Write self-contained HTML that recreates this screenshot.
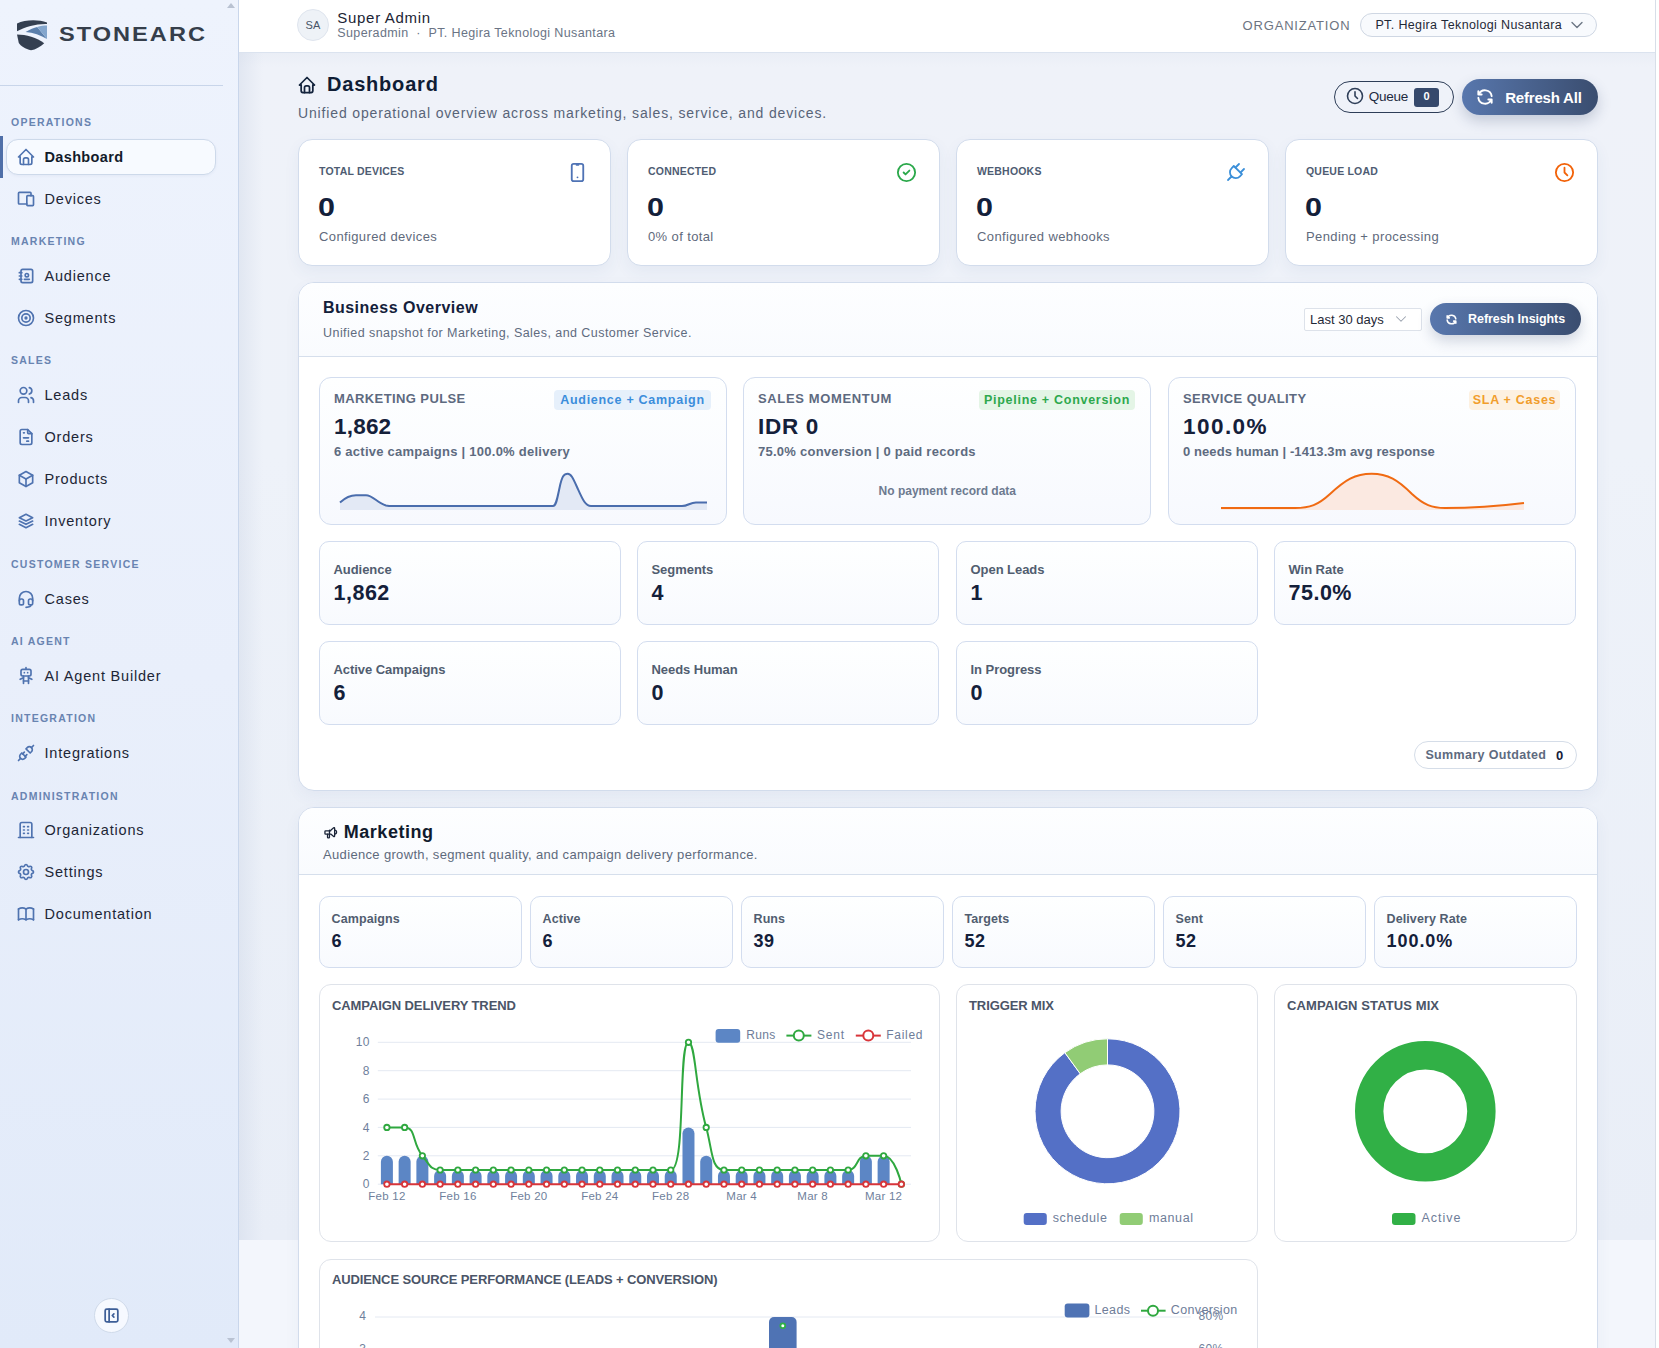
<!DOCTYPE html>
<html><head><meta charset="utf-8"><style>
*{box-sizing:border-box;margin:0;padding:0}
html,body{width:1659px;height:1348px;overflow:hidden;font-family:"Liberation Sans",sans-serif;color:#111c2e}
body{position:relative;background:#f4f7fc}
.a{position:absolute}
.t{position:absolute;white-space:nowrap;line-height:1}
</style></head><body>
<div class="a" style="left:0px;top:0px;width:239px;height:1348px;background:linear-gradient(180deg,#eef3fd 0%,#e9effb 50%,#e1eaf9 100%);border-right:1px solid #c9d6eb"></div>
<svg class="a" style="left:16px;top:18px;width:32px;height:33px" viewBox="16 18 32 33">
<path d="M17,23.4 C25,19.6 38,19.2 47,22.4 L47,23.9 C36,23.6 26,26.5 17,31.2 Z" fill="#343f50"/>
<path d="M25.6,32 C30,29.5 34,27.8 37.2,27 L47,39 C41,35.2 33,32.6 25.6,32 Z" fill="#5b7fab"/>
<path d="M37.2,27 C40.5,26 44,25.6 47,25.6 L47,39 Z" fill="#84a6cd"/>
<path d="M17,34.6 C26,34.6 37,37.8 44.2,43.2 C40.5,46.8 35.5,49.6 31,50.2 C25.5,49 20.5,46 18.8,43 Z" fill="#343f50"/>
</svg>
<div class="t" style="left:58.5px;top:24.0px;font-size:20.5px;font-weight:bold;color:#353e4b;letter-spacing:1.75px;transform:scaleX(1.15);transform-origin:0 0">STONEARC</div>
<div class="a" style="left:0px;top:85px;width:223px;height:1px;background:#c8d5ea"></div>
<div class="t" style="left:11.0px;top:117.1px;font-size:10.5px;font-weight:bold;color:#6984b1;letter-spacing:1.25px">OPERATIONS</div>
<div class="a" style="left:6px;top:139px;width:210px;height:36px;background:#f7faff;border:1px solid #cdd9ea;border-radius:12px;box-shadow:0 1px 3px rgba(60,90,140,0.06)"></div>
<div class="a" style="left:0px;top:136px;width:3px;height:42px;background:#4f6fa8"></div>
<svg class="a" style="left:15.5px;top:146.5px;width:20px;height:20px" viewBox="0 0 24 24" fill="none" stroke="#4f73b0" stroke-width="2" stroke-linecap="round" stroke-linejoin="round"><path d="M5 12l-2 0l9 -9l9 9l-2 0"/><path d="M5 12v7a2 2 0 0 0 2 2h10a2 2 0 0 0 2 -2v-7"/><path d="M9 21v-6a2 2 0 0 1 2 -2h2a2 2 0 0 1 2 2v6"/></svg>
<div class="t" style="left:44.5px;top:149.7px;font-size:14.5px;font-weight:bold;color:#121a2a;letter-spacing:0.35px">Dashboard</div>
<svg class="a" style="left:15.5px;top:188.5px;width:20px;height:20px" viewBox="0 0 24 24" fill="none" stroke="#4f73b0" stroke-width="2" stroke-linecap="round" stroke-linejoin="round"><path d="M13 9a1 1 0 0 1 1 -1h6a1 1 0 0 1 1 1v10a1 1 0 0 1 -1 1h-6a1 1 0 0 1 -1 -1v-10z"/><path d="M18 8v-3a1 1 0 0 0 -1 -1h-13a1 1 0 0 0 -1 1v12a1 1 0 0 0 1 1h9"/></svg>
<div class="t" style="left:44.5px;top:191.7px;font-size:14.5px;color:#1d2636;letter-spacing:0.8px">Devices</div>
<div class="t" style="left:11.0px;top:236.1px;font-size:10.5px;font-weight:bold;color:#6984b1;letter-spacing:1.25px">MARKETING</div>
<svg class="a" style="left:15.5px;top:265.5px;width:20px;height:20px" viewBox="0 0 24 24" fill="none" stroke="#4f73b0" stroke-width="2" stroke-linecap="round" stroke-linejoin="round"><path d="M20 6v12a2 2 0 0 1 -2 2h-10a2 2 0 0 1 -2 -2v-12a2 2 0 0 1 2 -2h10a2 2 0 0 1 2 2z"/><path d="M10 16h6"/><path d="M11 11a2 2 0 1 0 4 0a2 2 0 1 0 -4 0"/><path d="M4 8h3"/><path d="M4 12h3"/><path d="M4 16h3"/></svg>
<div class="t" style="left:44.5px;top:268.7px;font-size:14.5px;color:#1d2636;letter-spacing:0.8px">Audience</div>
<svg class="a" style="left:15.5px;top:307.5px;width:20px;height:20px" viewBox="0 0 24 24" fill="none" stroke="#4f73b0" stroke-width="2" stroke-linecap="round" stroke-linejoin="round"><path d="M11 12a1 1 0 1 0 2 0a1 1 0 1 0 -2 0"/><path d="M7 12a5 5 0 1 0 10 0a5 5 0 1 0 -10 0"/><path d="M3 12a9 9 0 1 0 18 0a9 9 0 1 0 -18 0"/></svg>
<div class="t" style="left:44.5px;top:310.7px;font-size:14.5px;color:#1d2636;letter-spacing:0.8px">Segments</div>
<div class="t" style="left:11.0px;top:355.1px;font-size:10.5px;font-weight:bold;color:#6984b1;letter-spacing:1.25px">SALES</div>
<svg class="a" style="left:15.5px;top:384.5px;width:20px;height:20px" viewBox="0 0 24 24" fill="none" stroke="#4f73b0" stroke-width="2" stroke-linecap="round" stroke-linejoin="round"><path d="M5 7a4 4 0 1 0 8 0a4 4 0 1 0 -8 0"/><path d="M3 21v-2a4 4 0 0 1 4 -4h4a4 4 0 0 1 4 4v2"/><path d="M16 3.13a4 4 0 0 1 0 7.75"/><path d="M21 21v-2a4 4 0 0 0 -3 -3.85"/></svg>
<div class="t" style="left:44.5px;top:387.7px;font-size:14.5px;color:#1d2636;letter-spacing:0.8px">Leads</div>
<svg class="a" style="left:15.5px;top:426.5px;width:20px;height:20px" viewBox="0 0 24 24" fill="none" stroke="#4f73b0" stroke-width="2" stroke-linecap="round" stroke-linejoin="round"><path d="M14 3v4a1 1 0 0 0 1 1h4"/><path d="M17 21h-10a2 2 0 0 1 -2 -2v-14a2 2 0 0 1 2 -2h7l5 5v11a2 2 0 0 1 -2 2z"/><path d="M9 7l1 0"/><path d="M9 13l6 0"/><path d="M13 17l2 0"/></svg>
<div class="t" style="left:44.5px;top:429.7px;font-size:14.5px;color:#1d2636;letter-spacing:0.8px">Orders</div>
<svg class="a" style="left:15.5px;top:468.5px;width:20px;height:20px" viewBox="0 0 24 24" fill="none" stroke="#4f73b0" stroke-width="2" stroke-linecap="round" stroke-linejoin="round"><path d="M12 3l8 4.5l0 9l-8 4.5l-8 -4.5l0 -9l8 -4.5"/><path d="M12 12l8 -4.5"/><path d="M12 12l0 9"/><path d="M12 12l-8 -4.5"/></svg>
<div class="t" style="left:44.5px;top:471.7px;font-size:14.5px;color:#1d2636;letter-spacing:0.8px">Products</div>
<svg class="a" style="left:15.5px;top:510.5px;width:20px;height:20px" viewBox="0 0 24 24" fill="none" stroke="#4f73b0" stroke-width="2" stroke-linecap="round" stroke-linejoin="round"><path d="M12 4l-8 4l8 4l8 -4l-8 -4"/><path d="M4 12l8 4l8 -4"/><path d="M4 16l8 4l8 -4"/></svg>
<div class="t" style="left:44.5px;top:513.7px;font-size:14.5px;color:#1d2636;letter-spacing:0.8px">Inventory</div>
<div class="t" style="left:11.0px;top:559.1px;font-size:10.5px;font-weight:bold;color:#6984b1;letter-spacing:1.25px">CUSTOMER SERVICE</div>
<svg class="a" style="left:15.5px;top:588.5px;width:20px;height:20px" viewBox="0 0 24 24" fill="none" stroke="#4f73b0" stroke-width="2" stroke-linecap="round" stroke-linejoin="round"><path d="M4 14v-3a8 8 0 1 1 16 0v3"/><path d="M18 19c0 1.657 -2.686 3 -6 3"/><path d="M4 14a2 2 0 0 1 2 -2h1a2 2 0 0 1 2 2v3a2 2 0 0 1 -2 2h-1a2 2 0 0 1 -2 -2v-3z"/><path d="M15 14a2 2 0 0 1 2 -2h1a2 2 0 0 1 2 2v3a2 2 0 0 1 -2 2h-1a2 2 0 0 1 -2 -2v-3z"/></svg>
<div class="t" style="left:44.5px;top:591.7px;font-size:14.5px;color:#1d2636;letter-spacing:0.8px">Cases</div>
<div class="t" style="left:11.0px;top:636.1px;font-size:10.5px;font-weight:bold;color:#6984b1;letter-spacing:1.25px">AI AGENT</div>
<svg class="a" style="left:15.5px;top:665.5px;width:20px;height:20px" viewBox="0 0 24 24" fill="none" stroke="#4f73b0" stroke-width="2" stroke-linecap="round" stroke-linejoin="round"><path d="M6 6a2 2 0 0 1 2 -2h8a2 2 0 0 1 2 2v4a2 2 0 0 1 -2 2h-8a2 2 0 0 1 -2 -2z"/><path d="M12 2v2"/><path d="M9 12v9"/><path d="M15 12v9"/><path d="M5 16l4 -2"/><path d="M15 14l4 2"/><path d="M9 18h6"/><path d="M10 8v.01"/><path d="M14 8v.01"/></svg>
<div class="t" style="left:44.5px;top:668.7px;font-size:14.5px;color:#1d2636;letter-spacing:0.8px">AI Agent Builder</div>
<div class="t" style="left:11.0px;top:713.1px;font-size:10.5px;font-weight:bold;color:#6984b1;letter-spacing:1.25px">INTEGRATION</div>
<svg class="a" style="left:15.5px;top:742.5px;width:20px;height:20px" viewBox="0 0 24 24" fill="none" stroke="#4f73b0" stroke-width="2" stroke-linecap="round" stroke-linejoin="round"><path d="M7 12l5 5l-1.5 1.5a3.536 3.536 0 1 1 -5 -5l1.5 -1.5z"/><path d="M17 12l-5 -5l1.5 -1.5a3.536 3.536 0 1 1 5 5l-1.5 1.5z"/><path d="M3 21l2.5 -2.5"/><path d="M18.5 5.5l2.5 -2.5"/><path d="M10 11l-2 2"/><path d="M13 14l-2 2"/></svg>
<div class="t" style="left:44.5px;top:745.7px;font-size:14.5px;color:#1d2636;letter-spacing:0.8px">Integrations</div>
<div class="t" style="left:11.0px;top:791.1px;font-size:10.5px;font-weight:bold;color:#6984b1;letter-spacing:1.25px">ADMINISTRATION</div>
<svg class="a" style="left:15.5px;top:819.5px;width:20px;height:20px" viewBox="0 0 24 24" fill="none" stroke="#4f73b0" stroke-width="2" stroke-linecap="round" stroke-linejoin="round"><path d="M3 21l18 0"/><path d="M9 8l1 0"/><path d="M9 12l1 0"/><path d="M9 16l1 0"/><path d="M14 8l1 0"/><path d="M14 12l1 0"/><path d="M14 16l1 0"/><path d="M5 21v-16a2 2 0 0 1 2 -2h10a2 2 0 0 1 2 2v16"/></svg>
<div class="t" style="left:44.5px;top:822.7px;font-size:14.5px;color:#1d2636;letter-spacing:0.8px">Organizations</div>
<svg class="a" style="left:15.5px;top:861.5px;width:20px;height:20px" viewBox="0 0 24 24" fill="none" stroke="#4f73b0" stroke-width="2" stroke-linecap="round" stroke-linejoin="round"><path d="M10.325 4.317c.426 -1.756 2.924 -1.756 3.35 0a1.724 1.724 0 0 0 2.573 1.066c1.543 -.94 3.31 .826 2.37 2.37a1.724 1.724 0 0 0 1.065 2.572c1.756 .426 1.756 2.924 0 3.35a1.724 1.724 0 0 0 -1.066 2.573c.94 1.543 -.826 3.31 -2.37 2.37a1.724 1.724 0 0 0 -2.572 1.065c-.426 1.756 -2.924 1.756 -3.35 0a1.724 1.724 0 0 0 -2.573 -1.066c-1.543 .94 -3.31 -.826 -2.37 -2.37a1.724 1.724 0 0 0 -1.065 -2.572c-1.756 -.426 -1.756 -2.924 0 -3.35a1.724 1.724 0 0 0 1.066 -2.573c-.94 -1.543 .826 -3.31 2.37 -2.37c1 .608 2.296 .07 2.572 -1.065z"/><path d="M9 12a3 3 0 1 0 6 0a3 3 0 0 0 -6 0"/></svg>
<div class="t" style="left:44.5px;top:864.7px;font-size:14.5px;color:#1d2636;letter-spacing:0.8px">Settings</div>
<svg class="a" style="left:15.5px;top:903.5px;width:20px;height:20px" viewBox="0 0 24 24" fill="none" stroke="#4f73b0" stroke-width="2" stroke-linecap="round" stroke-linejoin="round"><path d="M3 19a9 9 0 0 1 9 0a9 9 0 0 1 9 0"/><path d="M3 6a9 9 0 0 1 9 0a9 9 0 0 1 9 0"/><path d="M3 6l0 13"/><path d="M12 6l0 13"/><path d="M21 6l0 13"/></svg>
<div class="t" style="left:44.5px;top:906.7px;font-size:14.5px;color:#1d2636;letter-spacing:0.8px">Documentation</div>
<svg class="a" style="left:226px;top:1px;width:10px;height:8px" viewBox="0 0 10 8"><path d="M1,7 L5,2 L9,7Z" fill="#b9c2d2"/></svg>
<svg class="a" style="left:226px;top:1337px;width:10px;height:8px" viewBox="0 0 10 8"><path d="M1,1 L5,6 L9,1Z" fill="#b9c2d2"/></svg>
<div class="a" style="left:94px;top:1298px;width:35px;height:35px;background:#f6f9ff;border:1px solid #cfdaea;border-radius:50%"></div>
<svg class="a" style="left:102px;top:1306px;width:19px;height:19px" viewBox="0 0 24 24" fill="none" stroke="#3e5f98" stroke-width="2.2" stroke-linecap="round" stroke-linejoin="round"><path d="M4 6a2 2 0 0 1 2 -2h12a2 2 0 0 1 2 2v12a2 2 0 0 1 -2 2h-12a2 2 0 0 1 -2 -2z"/><path d="M9 4v16"/><path d="M15 10l-2 2l2 2"/></svg>
<div class="a" style="left:239px;top:0px;width:1417px;height:53px;background:#fff;border-bottom:1px solid #dbe3ef"></div>
<div class="a" style="left:239px;top:53px;width:1417px;height:1187px;background:linear-gradient(180deg,#eaeef6 0px,#eff2f9 14px,#eef2f9 400px,#e9eef7 100%)"></div>
<div class="a" style="left:239px;top:53px;width:24px;height:1295px;background:linear-gradient(90deg,rgba(200,210,228,0.35),rgba(200,210,228,0))"></div>
<div class="a" style="left:239px;top:1240px;width:1417px;height:108px;background:#f3f6fc"></div>
<div class="a" style="left:1655px;top:0px;width:4px;height:1348px;background:#fff;border-left:1px solid #d8dee8"></div>
<div class="a" style="left:297px;top:9px;width:32px;height:32px;background:#eef2f7;border:1px solid #dfe5ee;border-radius:50%"></div>
<div class="t" style="left:13.0px;width:600px;text-align:center;top:20.2px;font-size:11px;color:#485466;letter-spacing:0.2px">SA</div>
<div class="t" style="left:337.3px;top:9.5px;font-size:15px;color:#1b2434;letter-spacing:0.7px">Super Admin</div>
<div class="t" style="left:337.3px;top:27.4px;font-size:12.5px;color:#6a7485;letter-spacing:0.38px">Superadmin &nbsp;·&nbsp; PT. Hegira Teknologi Nusantara</div>
<div class="t" style="left:1242.6px;top:18.5px;font-size:13px;color:#6d7481;letter-spacing:0.82px">ORGANIZATION</div>
<div class="a" style="left:1360px;top:13px;width:237px;height:24px;background:#f8fafd;border:1px solid #cfd7e3;border-radius:12px"></div>
<div class="t" style="left:1375.4px;top:18.9px;font-size:12.5px;color:#1f2937;letter-spacing:0.37px">PT. Hegira Teknologi Nusantara</div>
<svg class="a" style="left:1566.5px;top:15px;width:20px;height:20px" viewBox="0 0 24 24" fill="none" stroke="#6b7583" stroke-width="1.6" stroke-linecap="round" stroke-linejoin="round"><path d="M6 9l6 6l6 -6"/></svg>
<svg class="a" style="left:297px;top:75px;width:20px;height:20px" viewBox="0 0 24 24" fill="none" stroke="#14243d" stroke-width="2.1" stroke-linecap="round" stroke-linejoin="round"><path d="M5 12l-2 0l9 -9l9 9l-2 0"/><path d="M5 12v7a2 2 0 0 0 2 2h10a2 2 0 0 0 2 -2v-7"/><path d="M9 21v-6a2 2 0 0 1 2 -2h2a2 2 0 0 1 2 2v6"/></svg>
<div class="t" style="left:327.0px;top:74.1px;font-size:20px;font-weight:bold;color:#0f1d35;letter-spacing:0.8px">Dashboard</div>
<div class="t" style="left:298.0px;top:106.1px;font-size:14px;color:#586478;letter-spacing:0.85px">Unified operational overview across marketing, sales, service, and devices.</div>
<div class="a" style="left:1334px;top:81px;width:120px;height:32px;border:1px solid #2e3e58;border-radius:16px"></div>
<svg class="a" style="left:1345px;top:86px;width:20px;height:20px" viewBox="0 0 24 24" fill="none" stroke="#2e3e58" stroke-width="1.9" stroke-linecap="round" stroke-linejoin="round"><path d="M3 12a9 9 0 1 0 18 0a9 9 0 0 0 -18 0"/><path d="M12 7v5l3 3"/></svg>
<div class="t" style="left:1368.8px;top:90.4px;font-size:13.5px;color:#1d2a40;letter-spacing:-0.25px">Queue</div>
<div class="a" style="left:1414px;top:88px;width:25px;height:19px;background:#36496c;border-radius:3px"></div>
<div class="t" style="left:1126.5px;width:600px;text-align:center;top:91.2px;font-size:11px;color:#fff;font-weight:bold">0</div>
<div class="a" style="left:1462px;top:79px;width:136px;height:36px;background:linear-gradient(90deg,#5877ad,#3a4d6f);border-radius:18px;box-shadow:0 6px 14px rgba(40,60,100,0.22)"></div>
<svg class="a" style="left:1475px;top:87px;width:20px;height:20px" viewBox="0 0 24 24" fill="none" stroke="#ffffff" stroke-width="2.3" stroke-linecap="round" stroke-linejoin="round"><path d="M20 11a8.1 8.1 0 0 0 -15.5 -2m-.5 -4v4h4"/><path d="M4 13a8.1 8.1 0 0 0 15.5 2m.5 4v-4h-4"/></svg>
<div class="t" style="left:1505.2px;top:89.6px;font-size:15px;color:#fff;font-weight:bold;letter-spacing:-0.2px">Refresh All</div>
<div class="a" style="left:298px;top:139px;width:313px;height:127px;background:#fff;border:1px solid #d2dcec;border-radius:14px;box-shadow:0 6px 16px rgba(50,80,130,0.06)"></div>
<div class="t" style="left:319.0px;top:166.3px;font-size:10.5px;font-weight:bold;color:#4e5c72;letter-spacing:0.2px">TOTAL DEVICES</div>
<div class="t" style="left:318.0px;top:194.8px;font-size:25px;font-weight:bold;color:#13203a;transform:scaleX(1.22);transform-origin:0 0">0</div>
<div class="t" style="left:319.0px;top:229.6px;font-size:13px;color:#5f6a7c;letter-spacing:0.38px">Configured devices</div>
<svg class="a" style="left:566px;top:160.5px;width:23px;height:23px" viewBox="0 0 24 24" fill="none" stroke="#4f73b5" stroke-width="1.9" stroke-linecap="round" stroke-linejoin="round"><path d="M6 5a2 2 0 0 1 2 -2h8a2 2 0 0 1 2 2v14a2 2 0 0 1 -2 2h-8a2 2 0 0 1 -2 -2v-14z"/><path d="M11 4h2"/><path d="M12 17v.01"/></svg>
<div class="a" style="left:627px;top:139px;width:313px;height:127px;background:#fff;border:1px solid #d2dcec;border-radius:14px;box-shadow:0 6px 16px rgba(50,80,130,0.06)"></div>
<div class="t" style="left:648.0px;top:166.3px;font-size:10.5px;font-weight:bold;color:#4e5c72;letter-spacing:0.2px">CONNECTED</div>
<div class="t" style="left:647.0px;top:194.8px;font-size:25px;font-weight:bold;color:#13203a;transform:scaleX(1.22);transform-origin:0 0">0</div>
<div class="t" style="left:648.0px;top:229.6px;font-size:13px;color:#5f6a7c;letter-spacing:0.38px">0% of total</div>
<svg class="a" style="left:895px;top:160.5px;width:23px;height:23px" viewBox="0 0 24 24" fill="none" stroke="#2aa84a" stroke-width="1.9" stroke-linecap="round" stroke-linejoin="round"><path d="M3 12a9 9 0 1 0 18 0a9 9 0 1 0 -18 0"/><path d="M9 12l2 2l4 -4"/></svg>
<div class="a" style="left:956px;top:139px;width:313px;height:127px;background:#fff;border:1px solid #d2dcec;border-radius:14px;box-shadow:0 6px 16px rgba(50,80,130,0.06)"></div>
<div class="t" style="left:977.0px;top:166.3px;font-size:10.5px;font-weight:bold;color:#4e5c72;letter-spacing:0.2px">WEBHOOKS</div>
<div class="t" style="left:976.0px;top:194.8px;font-size:25px;font-weight:bold;color:#13203a;transform:scaleX(1.22);transform-origin:0 0">0</div>
<div class="t" style="left:977.0px;top:229.6px;font-size:13px;color:#5f6a7c;letter-spacing:0.38px">Configured webhooks</div>
<svg class="a" style="left:1223.5px;top:160px;width:24px;height:24px" viewBox="0 0 24 24" fill="none" stroke="#3b8fd9" stroke-width="1.8" stroke-linecap="round" stroke-linejoin="round"><path d="M9.785 6l8.215 8.215l-2.054 2.054a5.81 5.81 0 1 1 -8.215 -8.215l2.054 -2.054z"/><path d="M4 20l3.5 -3.5"/><path d="M15 4l-3.5 3.5"/><path d="M20 9l-3.5 3.5"/></svg>
<div class="a" style="left:1285px;top:139px;width:313px;height:127px;background:#fff;border:1px solid #d2dcec;border-radius:14px;box-shadow:0 6px 16px rgba(50,80,130,0.06)"></div>
<div class="t" style="left:1306.0px;top:166.3px;font-size:10.5px;font-weight:bold;color:#4e5c72;letter-spacing:0.2px">QUEUE LOAD</div>
<div class="t" style="left:1305.0px;top:194.8px;font-size:25px;font-weight:bold;color:#13203a;transform:scaleX(1.22);transform-origin:0 0">0</div>
<div class="t" style="left:1306.0px;top:229.6px;font-size:13px;color:#5f6a7c;letter-spacing:0.38px">Pending + processing</div>
<svg class="a" style="left:1553px;top:160.5px;width:23px;height:23px" viewBox="0 0 24 24" fill="none" stroke="#f26208" stroke-width="1.9" stroke-linecap="round" stroke-linejoin="round"><path d="M3 12a9 9 0 1 0 18 0a9 9 0 0 0 -18 0"/><path d="M12 7v5l3 3"/></svg>
<div class="a" style="left:298px;top:282px;width:1300px;height:509px;background:#fff;border:1px solid #d2dcec;border-radius:16px;box-shadow:0 6px 16px rgba(50,80,130,0.05)"></div>
<div class="a" style="left:299px;top:283px;width:1298px;height:74px;background:linear-gradient(180deg,#fdfeff,#f9fbfe);border-radius:15px 15px 0 0;border-bottom:1px solid #d6dfec"></div>
<div class="t" style="left:322.9px;top:300.4px;font-size:16px;font-weight:bold;color:#13203a;letter-spacing:0.5px">Business Overview</div>
<div class="t" style="left:323.0px;top:327.4px;font-size:12.5px;color:#5f6b7e;letter-spacing:0.45px">Unified snapshot for Marketing, Sales, and Customer Service.</div>
<div class="a" style="left:1304px;top:308px;width:118px;height:23px;background:#fff;border:1px solid #dde2ea;border-radius:2px"></div>
<div class="t" style="left:1310.0px;top:312.8px;font-size:13px;color:#1f2937;letter-spacing:0px">Last 30 days</div>
<svg class="a" style="left:1392px;top:310px;width:18px;height:18px" viewBox="0 0 24 24" fill="none" stroke="#9aa2ae" stroke-width="1.4" stroke-linecap="round" stroke-linejoin="round"><path d="M6 9l6 6l6 -6"/></svg>
<div class="a" style="left:1430px;top:303px;width:151px;height:32px;background:linear-gradient(90deg,#5877ad,#3a4d6f);border-radius:16px;box-shadow:0 6px 14px rgba(40,60,100,0.2)"></div>
<svg class="a" style="left:1444.5px;top:312.5px;width:13px;height:13px" viewBox="0 0 24 24" fill="none" stroke="#ffffff" stroke-width="2.8" stroke-linecap="round" stroke-linejoin="round"><path d="M20 11a8.1 8.1 0 0 0 -15.5 -2m-.5 -4v4h4"/><path d="M4 13a8.1 8.1 0 0 0 15.5 2m.5 4v-4h-4"/></svg>
<div class="t" style="left:1468.0px;top:313.2px;font-size:12.5px;color:#fff;font-weight:bold;letter-spacing:-0.05px">Refresh Insights</div>
<div class="a" style="left:319px;top:377px;width:408px;height:148px;background:linear-gradient(180deg,#feffff,#f7f9fe);border:1px solid #d3ddef;border-radius:12px"></div>
<div class="t" style="left:334.0px;top:391.8px;font-size:13px;font-weight:bold;color:#5d6a80;letter-spacing:0.4px">MARKETING PULSE</div>
<div class="a" style="left:554px;top:390px;width:157px;height:20px;background:#e6f0fb;border-radius:4px"></div>
<div class="t" style="left:332.5px;width:600px;text-align:center;top:393.9px;font-size:12.5px;font-weight:bold;color:#3b8ddb;letter-spacing:0.72px">Audience + Campaign</div>
<div class="t" style="left:334.0px;top:415.5px;font-size:22.5px;font-weight:bold;color:#14203a;letter-spacing:0.2px">1,862</div>
<div class="t" style="left:334.0px;top:445.0px;font-size:13px;font-weight:bold;color:#5e6b80;letter-spacing:0.25px">6 active campaigns | 100.0% delivery</div>
<div class="a" style="left:743px;top:377px;width:408px;height:148px;background:linear-gradient(180deg,#feffff,#f7f9fe);border:1px solid #d3ddef;border-radius:12px"></div>
<div class="t" style="left:758.0px;top:391.8px;font-size:13px;font-weight:bold;color:#5d6a80;letter-spacing:0.64px">SALES MOMENTUM</div>
<div class="a" style="left:979px;top:390px;width:156px;height:20px;background:#e4f5e6;border-radius:4px"></div>
<div class="t" style="left:757.0px;width:600px;text-align:center;top:393.9px;font-size:12.5px;font-weight:bold;color:#2ea84d;letter-spacing:0.72px">Pipeline + Conversion</div>
<div class="t" style="left:758.0px;top:415.5px;font-size:22.5px;font-weight:bold;color:#14203a;letter-spacing:0.7px">IDR 0</div>
<div class="t" style="left:758.0px;top:445.0px;font-size:13px;font-weight:bold;color:#5e6b80;letter-spacing:0.25px">75.0% conversion | 0 paid records</div>
<div class="a" style="left:1168px;top:377px;width:408px;height:148px;background:linear-gradient(180deg,#feffff,#f7f9fe);border:1px solid #d3ddef;border-radius:12px"></div>
<div class="t" style="left:1183.0px;top:391.8px;font-size:13px;font-weight:bold;color:#5d6a80;letter-spacing:0.4px">SERVICE QUALITY</div>
<div class="a" style="left:1469px;top:390px;width:91px;height:20px;background:#fdf1e1;border-radius:4px"></div>
<div class="t" style="left:1214.5px;width:600px;text-align:center;top:393.9px;font-size:12.5px;font-weight:bold;color:#f19d2c;letter-spacing:0.72px">SLA + Cases</div>
<div class="t" style="left:1183.0px;top:415.5px;font-size:22.5px;font-weight:bold;color:#14203a;letter-spacing:1.45px">100.0%</div>
<div class="t" style="left:1183.0px;top:445.0px;font-size:13px;font-weight:bold;color:#5e6b80;letter-spacing:0.09px">0 needs human | -1413.3m avg response</div>
<div class="t" style="left:647.3px;width:600px;text-align:center;top:485.1px;font-size:12px;font-weight:bold;color:#6d7a90">No payment record data</div>
<svg class="a" style="left:319px;top:377px;width:408px;height:148px" viewBox="319 377 408 148">
<path d="M340,502.5 C345,498 349,495.3 356,495.3 L366,495.3 C373,495.3 377,503 386,505.5 L389,506 L553,506 C556,506 557,500 559.5,488 C562,476 564,473.7 567.7,473.7 C571,473.7 573,478 577,487 C582,498 585,506 591,506 L682,506 C688,506 690,502.5 696,502.5 L707,502.5 L707,510 L340,510 Z" fill="#e3e9f5"/>
<path d="M340,502.5 C345,498 349,495.3 356,495.3 L366,495.3 C373,495.3 377,503 386,505.5 L389,506 L553,506 C556,506 557,500 559.5,488 C562,476 564,473.7 567.7,473.7 C571,473.7 573,478 577,487 C582,498 585,506 591,506 L682,506 C688,506 690,502.5 696,502.5 L707,502.5" fill="none" stroke="#4a6dad" stroke-width="2"/>
</svg>
<svg class="a" style="left:1168px;top:377px;width:408px;height:148px" viewBox="1168 377 408 148">
<path d="M1221,508 L1295,508 C1310,508 1318,505 1330,494 C1345,480 1355,473.7 1371.6,473.7 C1388,473.7 1398,480 1412,494 C1424,505 1432,508 1445,508 C1470,508 1500,506 1524,503 L1524,510 L1221,510 Z" fill="#fbe9e1"/>
<path d="M1221,508 L1295,508 C1310,508 1318,505 1330,494 C1345,480 1355,473.7 1371.6,473.7 C1388,473.7 1398,480 1412,494 C1424,505 1432,508 1445,508 C1470,508 1500,506 1524,503" fill="none" stroke="#f06a12" stroke-width="2"/>
</svg>
<div class="a" style="left:319px;top:541px;width:302px;height:84px;background:linear-gradient(180deg,#feffff,#f8fafe);border:1px solid #d3ddef;border-radius:10px"></div>
<div class="t" style="left:333.5px;top:563.0px;font-size:13px;font-weight:bold;color:#515d70;letter-spacing:-0.05px">Audience</div>
<div class="t" style="left:333.5px;top:582.6px;font-size:21.5px;font-weight:bold;color:#14203a;letter-spacing:0.5px">1,862</div>
<div class="a" style="left:637px;top:541px;width:302px;height:84px;background:linear-gradient(180deg,#feffff,#f8fafe);border:1px solid #d3ddef;border-radius:10px"></div>
<div class="t" style="left:651.5px;top:563.0px;font-size:13px;font-weight:bold;color:#515d70;letter-spacing:-0.05px">Segments</div>
<div class="t" style="left:651.5px;top:582.6px;font-size:21.5px;font-weight:bold;color:#14203a;letter-spacing:0.5px">4</div>
<div class="a" style="left:956px;top:541px;width:302px;height:84px;background:linear-gradient(180deg,#feffff,#f8fafe);border:1px solid #d3ddef;border-radius:10px"></div>
<div class="t" style="left:970.5px;top:563.0px;font-size:13px;font-weight:bold;color:#515d70;letter-spacing:-0.05px">Open Leads</div>
<div class="t" style="left:970.5px;top:582.6px;font-size:21.5px;font-weight:bold;color:#14203a;letter-spacing:0.5px">1</div>
<div class="a" style="left:1274px;top:541px;width:302px;height:84px;background:linear-gradient(180deg,#feffff,#f8fafe);border:1px solid #d3ddef;border-radius:10px"></div>
<div class="t" style="left:1288.5px;top:563.0px;font-size:13px;font-weight:bold;color:#515d70;letter-spacing:-0.05px">Win Rate</div>
<div class="t" style="left:1288.5px;top:582.6px;font-size:21.5px;font-weight:bold;color:#14203a;letter-spacing:0.5px">75.0%</div>
<div class="a" style="left:319px;top:641px;width:302px;height:84px;background:linear-gradient(180deg,#feffff,#f8fafe);border:1px solid #d3ddef;border-radius:10px"></div>
<div class="t" style="left:333.5px;top:663.0px;font-size:13px;font-weight:bold;color:#515d70;letter-spacing:-0.05px">Active Campaigns</div>
<div class="t" style="left:333.5px;top:682.6px;font-size:21.5px;font-weight:bold;color:#14203a;letter-spacing:0.5px">6</div>
<div class="a" style="left:637px;top:641px;width:302px;height:84px;background:linear-gradient(180deg,#feffff,#f8fafe);border:1px solid #d3ddef;border-radius:10px"></div>
<div class="t" style="left:651.5px;top:663.0px;font-size:13px;font-weight:bold;color:#515d70;letter-spacing:-0.05px">Needs Human</div>
<div class="t" style="left:651.5px;top:682.6px;font-size:21.5px;font-weight:bold;color:#14203a;letter-spacing:0.5px">0</div>
<div class="a" style="left:956px;top:641px;width:302px;height:84px;background:linear-gradient(180deg,#feffff,#f8fafe);border:1px solid #d3ddef;border-radius:10px"></div>
<div class="t" style="left:970.5px;top:663.0px;font-size:13px;font-weight:bold;color:#515d70;letter-spacing:-0.05px">In Progress</div>
<div class="t" style="left:970.5px;top:682.6px;font-size:21.5px;font-weight:bold;color:#14203a;letter-spacing:0.5px">0</div>
<div class="a" style="left:1414px;top:741px;width:163px;height:28px;background:#fff;border:1px solid #d5dde8;border-radius:14px"></div>
<div class="t" style="left:1425.4px;top:749.4px;font-size:12.5px;font-weight:bold;color:#5e6b80;letter-spacing:0.35px">Summary Outdated</div>
<div class="t" style="left:1556.0px;top:749.0px;font-size:13px;font-weight:bold;color:#14203a">0</div>
<div class="a" style="left:298px;top:807px;width:1300px;height:600px;background:#fff;border:1px solid #d2dcec;border-radius:16px;box-shadow:0 6px 16px rgba(50,80,130,0.05)"></div>
<div class="a" style="left:299px;top:808px;width:1298px;height:67px;background:linear-gradient(180deg,#fdfeff,#f9fbfe);border-radius:15px 15px 0 0;border-bottom:1px solid #d6dfec"></div>
<svg class="a" style="left:322.5px;top:824.5px;width:15.5px;height:15.5px" viewBox="0 0 24 24" fill="none" stroke="#1a2438" stroke-width="2.0" stroke-linecap="round" stroke-linejoin="round"><path d="M18 8a3 3 0 0 1 0 6"/><path d="M10 8v11a1 1 0 0 1 -1 1h-1a1 1 0 0 1 -1 -1v-5"/><path d="M12 8h0l4.524 -3.77a.9 .9 0 0 1 1.476 .692v12.156a.9 .9 0 0 1 -1.476 .692l-4.524 -3.77h-8a1 1 0 0 1 -1 -1v-3a1 1 0 0 1 1 -1h8"/></svg>
<div class="t" style="left:343.7px;top:823.4px;font-size:18px;font-weight:bold;color:#111b2d;letter-spacing:0.55px">Marketing</div>
<div class="t" style="left:323.0px;top:847.5px;font-size:13px;color:#5e6a7c;letter-spacing:0.34px">Audience growth, segment quality, and campaign delivery performance.</div>
<div class="a" style="left:319px;top:896px;width:203px;height:72px;background:linear-gradient(180deg,#feffff,#f8fafe);border:1px solid #d3ddef;border-radius:10px"></div>
<div class="t" style="left:331.5px;top:912.8px;font-size:12.5px;font-weight:bold;color:#515d70;letter-spacing:0.1px">Campaigns</div>
<div class="t" style="left:331.5px;top:932.0px;font-size:18px;font-weight:bold;color:#14203a;letter-spacing:0.5px">6</div>
<div class="a" style="left:530px;top:896px;width:203px;height:72px;background:linear-gradient(180deg,#feffff,#f8fafe);border:1px solid #d3ddef;border-radius:10px"></div>
<div class="t" style="left:542.5px;top:912.8px;font-size:12.5px;font-weight:bold;color:#515d70;letter-spacing:0.1px">Active</div>
<div class="t" style="left:542.5px;top:932.0px;font-size:18px;font-weight:bold;color:#14203a;letter-spacing:0.5px">6</div>
<div class="a" style="left:741px;top:896px;width:203px;height:72px;background:linear-gradient(180deg,#feffff,#f8fafe);border:1px solid #d3ddef;border-radius:10px"></div>
<div class="t" style="left:753.5px;top:912.8px;font-size:12.5px;font-weight:bold;color:#515d70;letter-spacing:0.1px">Runs</div>
<div class="t" style="left:753.5px;top:932.0px;font-size:18px;font-weight:bold;color:#14203a;letter-spacing:0.5px">39</div>
<div class="a" style="left:952px;top:896px;width:203px;height:72px;background:linear-gradient(180deg,#feffff,#f8fafe);border:1px solid #d3ddef;border-radius:10px"></div>
<div class="t" style="left:964.5px;top:912.8px;font-size:12.5px;font-weight:bold;color:#515d70;letter-spacing:0.1px">Targets</div>
<div class="t" style="left:964.5px;top:932.0px;font-size:18px;font-weight:bold;color:#14203a;letter-spacing:0.5px">52</div>
<div class="a" style="left:1163px;top:896px;width:203px;height:72px;background:linear-gradient(180deg,#feffff,#f8fafe);border:1px solid #d3ddef;border-radius:10px"></div>
<div class="t" style="left:1175.5px;top:912.8px;font-size:12.5px;font-weight:bold;color:#515d70;letter-spacing:0.1px">Sent</div>
<div class="t" style="left:1175.5px;top:932.0px;font-size:18px;font-weight:bold;color:#14203a;letter-spacing:0.5px">52</div>
<div class="a" style="left:1374px;top:896px;width:203px;height:72px;background:linear-gradient(180deg,#feffff,#f8fafe);border:1px solid #d3ddef;border-radius:10px"></div>
<div class="t" style="left:1386.5px;top:912.8px;font-size:12.5px;font-weight:bold;color:#515d70;letter-spacing:0.1px">Delivery Rate</div>
<div class="t" style="left:1386.5px;top:932.0px;font-size:18px;font-weight:bold;color:#14203a;letter-spacing:0.95px">100.0%</div>
<div class="a" style="left:319px;top:984px;width:621px;height:258px;background:#fff;border:1px solid #dfe3ea;border-radius:12px"></div>
<div class="t" style="left:332.0px;top:998.7px;font-size:13px;font-weight:bold;color:#4b5568;letter-spacing:-0.1px">CAMPAIGN DELIVERY TREND</div>
<div class="a" style="left:956px;top:984px;width:302px;height:258px;background:#fff;border:1px solid #dfe3ea;border-radius:12px"></div>
<div class="t" style="left:969.0px;top:998.7px;font-size:13px;font-weight:bold;color:#4b5568;letter-spacing:-0.1px">TRIGGER MIX</div>
<div class="a" style="left:1274px;top:984px;width:303px;height:258px;background:#fff;border:1px solid #dfe3ea;border-radius:12px"></div>
<div class="t" style="left:1287.0px;top:998.7px;font-size:13px;font-weight:bold;color:#4b5568;letter-spacing:0.1px">CAMPAIGN STATUS MIX</div>
<div class="a" style="left:319px;top:1259px;width:939px;height:200px;background:#fff;border:1px solid #dfe3ea;border-radius:12px"></div>
<div class="t" style="left:332.0px;top:1273.0px;font-size:13px;font-weight:bold;color:#4b5568;letter-spacing:-0.12px">AUDIENCE SOURCE PERFORMANCE (LEADS + CONVERSION)</div>
<svg class="a" style="left:0;top:0;width:1659px;height:1348px;overflow:visible" viewBox="0 0 1659 1348"><line x1="377.8" y1="1184.2" x2="911" y2="1184.2" stroke="#e4e9f2" stroke-width="1"/><line x1="377.8" y1="1155.8" x2="911" y2="1155.8" stroke="#e4e9f2" stroke-width="1"/><line x1="377.8" y1="1127.4" x2="911" y2="1127.4" stroke="#e4e9f2" stroke-width="1"/><line x1="377.8" y1="1099.1" x2="911" y2="1099.1" stroke="#e4e9f2" stroke-width="1"/><line x1="377.8" y1="1070.7" x2="911" y2="1070.7" stroke="#e4e9f2" stroke-width="1"/><line x1="377.8" y1="1042.3" x2="911" y2="1042.3" stroke="#e4e9f2" stroke-width="1"/><path d="M380.90,1184.20 L380.90,1161.82 A6,6 0 0 1 392.90,1161.82 L392.90,1184.20 Z" fill="#5c86c5"/><path d="M398.64,1184.20 L398.64,1161.82 A6,6 0 0 1 410.64,1161.82 L410.64,1184.20 Z" fill="#5c86c5"/><path d="M416.38,1184.20 L416.38,1161.82 A6,6 0 0 1 428.38,1161.82 L428.38,1184.20 Z" fill="#5c86c5"/><path d="M434.12,1184.20 L434.12,1176.01 A6,6 0 0 1 446.12,1176.01 L446.12,1184.20 Z" fill="#5c86c5"/><path d="M451.86,1184.20 L451.86,1176.01 A6,6 0 0 1 463.86,1176.01 L463.86,1184.20 Z" fill="#5c86c5"/><path d="M469.60,1184.20 L469.60,1176.01 A6,6 0 0 1 481.60,1176.01 L481.60,1184.20 Z" fill="#5c86c5"/><path d="M487.34,1184.20 L487.34,1176.01 A6,6 0 0 1 499.34,1176.01 L499.34,1184.20 Z" fill="#5c86c5"/><path d="M505.08,1184.20 L505.08,1176.01 A6,6 0 0 1 517.08,1176.01 L517.08,1184.20 Z" fill="#5c86c5"/><path d="M522.82,1184.20 L522.82,1176.01 A6,6 0 0 1 534.82,1176.01 L534.82,1184.20 Z" fill="#5c86c5"/><path d="M540.56,1184.20 L540.56,1176.01 A6,6 0 0 1 552.56,1176.01 L552.56,1184.20 Z" fill="#5c86c5"/><path d="M558.30,1184.20 L558.30,1176.01 A6,6 0 0 1 570.30,1176.01 L570.30,1184.20 Z" fill="#5c86c5"/><path d="M576.04,1184.20 L576.04,1176.01 A6,6 0 0 1 588.04,1176.01 L588.04,1184.20 Z" fill="#5c86c5"/><path d="M593.78,1184.20 L593.78,1176.01 A6,6 0 0 1 605.78,1176.01 L605.78,1184.20 Z" fill="#5c86c5"/><path d="M611.52,1184.20 L611.52,1176.01 A6,6 0 0 1 623.52,1176.01 L623.52,1184.20 Z" fill="#5c86c5"/><path d="M629.26,1184.20 L629.26,1176.01 A6,6 0 0 1 641.26,1176.01 L641.26,1184.20 Z" fill="#5c86c5"/><path d="M647.00,1184.20 L647.00,1176.01 A6,6 0 0 1 659.00,1176.01 L659.00,1184.20 Z" fill="#5c86c5"/><path d="M664.74,1184.20 L664.74,1176.01 A6,6 0 0 1 676.74,1176.01 L676.74,1184.20 Z" fill="#5c86c5"/><path d="M682.48,1184.20 L682.48,1133.44 A6,6 0 0 1 694.48,1133.44 L694.48,1184.20 Z" fill="#5c86c5"/><path d="M700.22,1184.20 L700.22,1161.82 A6,6 0 0 1 712.22,1161.82 L712.22,1184.20 Z" fill="#5c86c5"/><path d="M717.96,1184.20 L717.96,1176.01 A6,6 0 0 1 729.96,1176.01 L729.96,1184.20 Z" fill="#5c86c5"/><path d="M735.70,1184.20 L735.70,1176.01 A6,6 0 0 1 747.70,1176.01 L747.70,1184.20 Z" fill="#5c86c5"/><path d="M753.44,1184.20 L753.44,1176.01 A6,6 0 0 1 765.44,1176.01 L765.44,1184.20 Z" fill="#5c86c5"/><path d="M771.18,1184.20 L771.18,1176.01 A6,6 0 0 1 783.18,1176.01 L783.18,1184.20 Z" fill="#5c86c5"/><path d="M788.92,1184.20 L788.92,1176.01 A6,6 0 0 1 800.92,1176.01 L800.92,1184.20 Z" fill="#5c86c5"/><path d="M806.66,1184.20 L806.66,1176.01 A6,6 0 0 1 818.66,1176.01 L818.66,1184.20 Z" fill="#5c86c5"/><path d="M824.40,1184.20 L824.40,1176.01 A6,6 0 0 1 836.40,1176.01 L836.40,1184.20 Z" fill="#5c86c5"/><path d="M842.14,1184.20 L842.14,1176.01 A6,6 0 0 1 854.14,1176.01 L854.14,1184.20 Z" fill="#5c86c5"/><path d="M859.88,1184.20 L859.88,1161.82 A6,6 0 0 1 871.88,1161.82 L871.88,1184.20 Z" fill="#5c86c5"/><path d="M877.62,1184.20 L877.62,1161.82 A6,6 0 0 1 889.62,1161.82 L889.62,1184.20 Z" fill="#5c86c5"/><path d="M386.90,1127.44 C386.90,1127.44 398.49,1127.44 404.64,1127.44 C416.23,1127.44 411.81,1143.14 422.38,1155.82 C429.55,1164.43 430.16,1170.01 440.12,1170.01 C447.90,1170.01 448.99,1170.01 457.86,1170.01 C466.73,1170.01 466.73,1170.01 475.60,1170.01 C484.47,1170.01 484.47,1170.01 493.34,1170.01 C502.21,1170.01 502.21,1170.01 511.08,1170.01 C519.95,1170.01 519.95,1170.01 528.82,1170.01 C537.69,1170.01 537.69,1170.01 546.56,1170.01 C555.43,1170.01 555.43,1170.01 564.30,1170.01 C573.17,1170.01 573.17,1170.01 582.04,1170.01 C590.91,1170.01 590.91,1170.01 599.78,1170.01 C608.65,1170.01 608.65,1170.01 617.52,1170.01 C626.39,1170.01 626.39,1170.01 635.26,1170.01 C644.13,1170.01 644.13,1170.01 653.00,1170.01 C661.87,1170.01 668.59,1170.01 670.74,1170.01 C686.33,1170.01 677.89,1042.30 688.48,1042.30 C695.63,1042.30 694.63,1085.71 706.22,1127.44 C712.37,1149.57 711.15,1170.01 723.96,1170.01 C728.89,1170.01 732.83,1170.01 741.70,1170.01 C750.57,1170.01 750.57,1170.01 759.44,1170.01 C768.31,1170.01 768.31,1170.01 777.18,1170.01 C786.05,1170.01 786.05,1170.01 794.92,1170.01 C803.79,1170.01 803.79,1170.01 812.66,1170.01 C821.53,1170.01 821.53,1170.01 830.40,1170.01 C839.27,1170.01 840.36,1170.01 848.14,1170.01 C858.10,1170.01 855.92,1155.82 865.88,1155.82 C873.66,1155.82 877.47,1155.82 883.62,1155.82 C895.21,1155.82 901.36,1184.20 901.36,1184.20" fill="none" stroke="#2fa83f" stroke-width="2"/><circle cx="386.90" cy="1127.44" r="2.7" fill="#fff" stroke="#2fa83f" stroke-width="1.8"/><circle cx="404.64" cy="1127.44" r="2.7" fill="#fff" stroke="#2fa83f" stroke-width="1.8"/><circle cx="422.38" cy="1155.82" r="2.7" fill="#fff" stroke="#2fa83f" stroke-width="1.8"/><circle cx="440.12" cy="1170.01" r="2.7" fill="#fff" stroke="#2fa83f" stroke-width="1.8"/><circle cx="457.86" cy="1170.01" r="2.7" fill="#fff" stroke="#2fa83f" stroke-width="1.8"/><circle cx="475.60" cy="1170.01" r="2.7" fill="#fff" stroke="#2fa83f" stroke-width="1.8"/><circle cx="493.34" cy="1170.01" r="2.7" fill="#fff" stroke="#2fa83f" stroke-width="1.8"/><circle cx="511.08" cy="1170.01" r="2.7" fill="#fff" stroke="#2fa83f" stroke-width="1.8"/><circle cx="528.82" cy="1170.01" r="2.7" fill="#fff" stroke="#2fa83f" stroke-width="1.8"/><circle cx="546.56" cy="1170.01" r="2.7" fill="#fff" stroke="#2fa83f" stroke-width="1.8"/><circle cx="564.30" cy="1170.01" r="2.7" fill="#fff" stroke="#2fa83f" stroke-width="1.8"/><circle cx="582.04" cy="1170.01" r="2.7" fill="#fff" stroke="#2fa83f" stroke-width="1.8"/><circle cx="599.78" cy="1170.01" r="2.7" fill="#fff" stroke="#2fa83f" stroke-width="1.8"/><circle cx="617.52" cy="1170.01" r="2.7" fill="#fff" stroke="#2fa83f" stroke-width="1.8"/><circle cx="635.26" cy="1170.01" r="2.7" fill="#fff" stroke="#2fa83f" stroke-width="1.8"/><circle cx="653.00" cy="1170.01" r="2.7" fill="#fff" stroke="#2fa83f" stroke-width="1.8"/><circle cx="670.74" cy="1170.01" r="2.7" fill="#fff" stroke="#2fa83f" stroke-width="1.8"/><circle cx="688.48" cy="1042.30" r="2.7" fill="#fff" stroke="#2fa83f" stroke-width="1.8"/><circle cx="706.22" cy="1127.44" r="2.7" fill="#fff" stroke="#2fa83f" stroke-width="1.8"/><circle cx="723.96" cy="1170.01" r="2.7" fill="#fff" stroke="#2fa83f" stroke-width="1.8"/><circle cx="741.70" cy="1170.01" r="2.7" fill="#fff" stroke="#2fa83f" stroke-width="1.8"/><circle cx="759.44" cy="1170.01" r="2.7" fill="#fff" stroke="#2fa83f" stroke-width="1.8"/><circle cx="777.18" cy="1170.01" r="2.7" fill="#fff" stroke="#2fa83f" stroke-width="1.8"/><circle cx="794.92" cy="1170.01" r="2.7" fill="#fff" stroke="#2fa83f" stroke-width="1.8"/><circle cx="812.66" cy="1170.01" r="2.7" fill="#fff" stroke="#2fa83f" stroke-width="1.8"/><circle cx="830.40" cy="1170.01" r="2.7" fill="#fff" stroke="#2fa83f" stroke-width="1.8"/><circle cx="848.14" cy="1170.01" r="2.7" fill="#fff" stroke="#2fa83f" stroke-width="1.8"/><circle cx="865.88" cy="1155.82" r="2.7" fill="#fff" stroke="#2fa83f" stroke-width="1.8"/><circle cx="883.62" cy="1155.82" r="2.7" fill="#fff" stroke="#2fa83f" stroke-width="1.8"/><circle cx="901.36" cy="1184.20" r="2.7" fill="#fff" stroke="#2fa83f" stroke-width="1.8"/><path d="M386.90,1184.2 L901.36,1184.2" fill="none" stroke="#d8353a" stroke-width="2"/><circle cx="386.90" cy="1184.20" r="2.7" fill="#fff" stroke="#d8353a" stroke-width="1.8"/><circle cx="404.64" cy="1184.20" r="2.7" fill="#fff" stroke="#d8353a" stroke-width="1.8"/><circle cx="422.38" cy="1184.20" r="2.7" fill="#fff" stroke="#d8353a" stroke-width="1.8"/><circle cx="440.12" cy="1184.20" r="2.7" fill="#fff" stroke="#d8353a" stroke-width="1.8"/><circle cx="457.86" cy="1184.20" r="2.7" fill="#fff" stroke="#d8353a" stroke-width="1.8"/><circle cx="475.60" cy="1184.20" r="2.7" fill="#fff" stroke="#d8353a" stroke-width="1.8"/><circle cx="493.34" cy="1184.20" r="2.7" fill="#fff" stroke="#d8353a" stroke-width="1.8"/><circle cx="511.08" cy="1184.20" r="2.7" fill="#fff" stroke="#d8353a" stroke-width="1.8"/><circle cx="528.82" cy="1184.20" r="2.7" fill="#fff" stroke="#d8353a" stroke-width="1.8"/><circle cx="546.56" cy="1184.20" r="2.7" fill="#fff" stroke="#d8353a" stroke-width="1.8"/><circle cx="564.30" cy="1184.20" r="2.7" fill="#fff" stroke="#d8353a" stroke-width="1.8"/><circle cx="582.04" cy="1184.20" r="2.7" fill="#fff" stroke="#d8353a" stroke-width="1.8"/><circle cx="599.78" cy="1184.20" r="2.7" fill="#fff" stroke="#d8353a" stroke-width="1.8"/><circle cx="617.52" cy="1184.20" r="2.7" fill="#fff" stroke="#d8353a" stroke-width="1.8"/><circle cx="635.26" cy="1184.20" r="2.7" fill="#fff" stroke="#d8353a" stroke-width="1.8"/><circle cx="653.00" cy="1184.20" r="2.7" fill="#fff" stroke="#d8353a" stroke-width="1.8"/><circle cx="670.74" cy="1184.20" r="2.7" fill="#fff" stroke="#d8353a" stroke-width="1.8"/><circle cx="688.48" cy="1184.20" r="2.7" fill="#fff" stroke="#d8353a" stroke-width="1.8"/><circle cx="706.22" cy="1184.20" r="2.7" fill="#fff" stroke="#d8353a" stroke-width="1.8"/><circle cx="723.96" cy="1184.20" r="2.7" fill="#fff" stroke="#d8353a" stroke-width="1.8"/><circle cx="741.70" cy="1184.20" r="2.7" fill="#fff" stroke="#d8353a" stroke-width="1.8"/><circle cx="759.44" cy="1184.20" r="2.7" fill="#fff" stroke="#d8353a" stroke-width="1.8"/><circle cx="777.18" cy="1184.20" r="2.7" fill="#fff" stroke="#d8353a" stroke-width="1.8"/><circle cx="794.92" cy="1184.20" r="2.7" fill="#fff" stroke="#d8353a" stroke-width="1.8"/><circle cx="812.66" cy="1184.20" r="2.7" fill="#fff" stroke="#d8353a" stroke-width="1.8"/><circle cx="830.40" cy="1184.20" r="2.7" fill="#fff" stroke="#d8353a" stroke-width="1.8"/><circle cx="848.14" cy="1184.20" r="2.7" fill="#fff" stroke="#d8353a" stroke-width="1.8"/><circle cx="865.88" cy="1184.20" r="2.7" fill="#fff" stroke="#d8353a" stroke-width="1.8"/><circle cx="883.62" cy="1184.20" r="2.7" fill="#fff" stroke="#d8353a" stroke-width="1.8"/><circle cx="901.36" cy="1184.20" r="2.7" fill="#fff" stroke="#d8353a" stroke-width="1.8"/><rect x="715.6" y="1029" width="24.6" height="13.7" rx="3" fill="#5c86c5"/><line x1="786.4" y1="1035.6" x2="811.4" y2="1035.6" stroke="#2fa83f" stroke-width="2"/><circle cx="798.8" cy="1035.6" r="5" fill="#fff" stroke="#2fa83f" stroke-width="2"/><line x1="855.8" y1="1035.6" x2="880.8" y2="1035.6" stroke="#d8353a" stroke-width="2"/><circle cx="868.3" cy="1035.6" r="5" fill="#fff" stroke="#d8353a" stroke-width="2"/></svg>
<div class="t" style="left:746.3px;top:1028.6px;font-size:12px;color:#6e7d99;letter-spacing:0.35px">Runs</div>
<div class="t" style="left:816.9px;top:1028.6px;font-size:12px;color:#6e7d99;letter-spacing:0.8px">Sent</div>
<div class="t" style="left:886.3px;top:1028.6px;font-size:12px;color:#6e7d99;letter-spacing:0.7px">Failed</div>
<div class="t" style="left:-230.4px;width:600px;text-align:right;top:1178.3px;font-size:12px;color:#6f7f9c;letter-spacing:0.2px">0</div>
<div class="t" style="left:-230.4px;width:600px;text-align:right;top:1150.0px;font-size:12px;color:#6f7f9c;letter-spacing:0.2px">2</div>
<div class="t" style="left:-230.4px;width:600px;text-align:right;top:1121.6px;font-size:12px;color:#6f7f9c;letter-spacing:0.2px">4</div>
<div class="t" style="left:-230.4px;width:600px;text-align:right;top:1093.2px;font-size:12px;color:#6f7f9c;letter-spacing:0.2px">6</div>
<div class="t" style="left:-230.4px;width:600px;text-align:right;top:1064.8px;font-size:12px;color:#6f7f9c;letter-spacing:0.2px">8</div>
<div class="t" style="left:-230.4px;width:600px;text-align:right;top:1036.4px;font-size:12px;color:#6f7f9c;letter-spacing:0.2px">10</div>
<div class="t" style="left:86.9px;width:600px;text-align:center;top:1191.2px;font-size:11.5px;color:#6f7f9c;letter-spacing:0.25px">Feb 12</div>
<div class="t" style="left:157.9px;width:600px;text-align:center;top:1191.2px;font-size:11.5px;color:#6f7f9c;letter-spacing:0.25px">Feb 16</div>
<div class="t" style="left:228.8px;width:600px;text-align:center;top:1191.2px;font-size:11.5px;color:#6f7f9c;letter-spacing:0.25px">Feb 20</div>
<div class="t" style="left:299.8px;width:600px;text-align:center;top:1191.2px;font-size:11.5px;color:#6f7f9c;letter-spacing:0.25px">Feb 24</div>
<div class="t" style="left:370.7px;width:600px;text-align:center;top:1191.2px;font-size:11.5px;color:#6f7f9c;letter-spacing:0.25px">Feb 28</div>
<div class="t" style="left:441.7px;width:600px;text-align:center;top:1191.2px;font-size:11.5px;color:#6f7f9c;letter-spacing:0.25px">Mar 4</div>
<div class="t" style="left:512.7px;width:600px;text-align:center;top:1191.2px;font-size:11.5px;color:#6f7f9c;letter-spacing:0.25px">Mar 8</div>
<div class="t" style="left:583.6px;width:600px;text-align:center;top:1191.2px;font-size:11.5px;color:#6f7f9c;letter-spacing:0.25px">Mar 12</div>
<svg class="a" style="left:0;top:0;width:1659px;height:1348px;overflow:visible" viewBox="0 0 1659 1348"><path d="M1107.50,1038.80 A72.5,72.5 0 1 1 1064.89,1052.65 L1080.23,1073.76 A46.4,46.4 0 1 0 1107.50,1064.90 Z" fill="#5470c6" stroke="#fff" stroke-width="1"/><path d="M1064.89,1052.65 A72.5,72.5 0 0 1 1107.50,1038.80 L1107.50,1064.90 A46.4,46.4 0 0 0 1080.23,1073.76 Z" fill="#91cc75" stroke="#fff" stroke-width="1"/><circle cx="1425.3" cy="1111.3" r="56.1" fill="none" stroke="#31b046" stroke-width="28.4"/><rect x="1023.7" y="1213" width="23.1" height="12" rx="3" fill="#5470c6"/><rect x="1119.7" y="1213" width="23.1" height="12" rx="3" fill="#91cc75"/><rect x="1392" y="1213" width="23.5" height="12" rx="3" fill="#31b046"/></svg>
<div class="t" style="left:1052.7px;top:1211.6px;font-size:12.5px;color:#6e7d99;letter-spacing:0.6px">schedule</div>
<div class="t" style="left:1149.0px;top:1211.6px;font-size:12.5px;color:#6e7d99;letter-spacing:0.6px">manual</div>
<div class="t" style="left:1421.4px;top:1211.6px;font-size:12.5px;color:#6e7d99;letter-spacing:1px">Active</div>
<svg class="a" style="left:0;top:0;width:1659px;height:1348px;overflow:visible" viewBox="0 0 1659 1348"><line x1="375" y1="1317" x2="1190.7" y2="1317" stroke="#e4e9f2" stroke-width="1"/><path d="M769,1360 L769,1322 A5,5 0 0 1 774,1317 L791.6,1317 A5,5 0 0 1 796.6,1322 L796.6,1360 Z" fill="#4f73b4"/><circle cx="782.8" cy="1325.7" r="2.4" fill="#fff" stroke="#2fb046" stroke-width="1.8"/><rect x="1064.7" y="1303.6" width="24.7" height="13.9" rx="3" fill="#4f73b4"/><line x1="1141" y1="1310.7" x2="1165.6" y2="1310.7" stroke="#2fa83f" stroke-width="2"/><circle cx="1153" cy="1310.7" r="5" fill="#fff" stroke="#2fa83f" stroke-width="2"/></svg>
<div class="t" style="left:1094.5px;top:1303.9px;font-size:12.5px;color:#6e7d99;letter-spacing:0.35px">Leads</div>
<div class="t" style="left:1170.8px;top:1303.9px;font-size:12.5px;color:#6e7d99;letter-spacing:0.35px">Conversion</div>
<div class="t" style="left:1198.6px;top:1309.8px;font-size:12px;color:#6f7f9c;letter-spacing:0.3px">80%</div>
<div class="t" style="left:1198.6px;top:1342.8px;font-size:12px;color:#6f7f9c;letter-spacing:0.3px">60%</div>
<div class="t" style="left:-234.0px;width:600px;text-align:right;top:1310.3px;font-size:12px;color:#6f7f9c">4</div>
<div class="t" style="left:-234.0px;width:600px;text-align:right;top:1342.8px;font-size:12px;color:#6f7f9c">3</div>
</body></html>
